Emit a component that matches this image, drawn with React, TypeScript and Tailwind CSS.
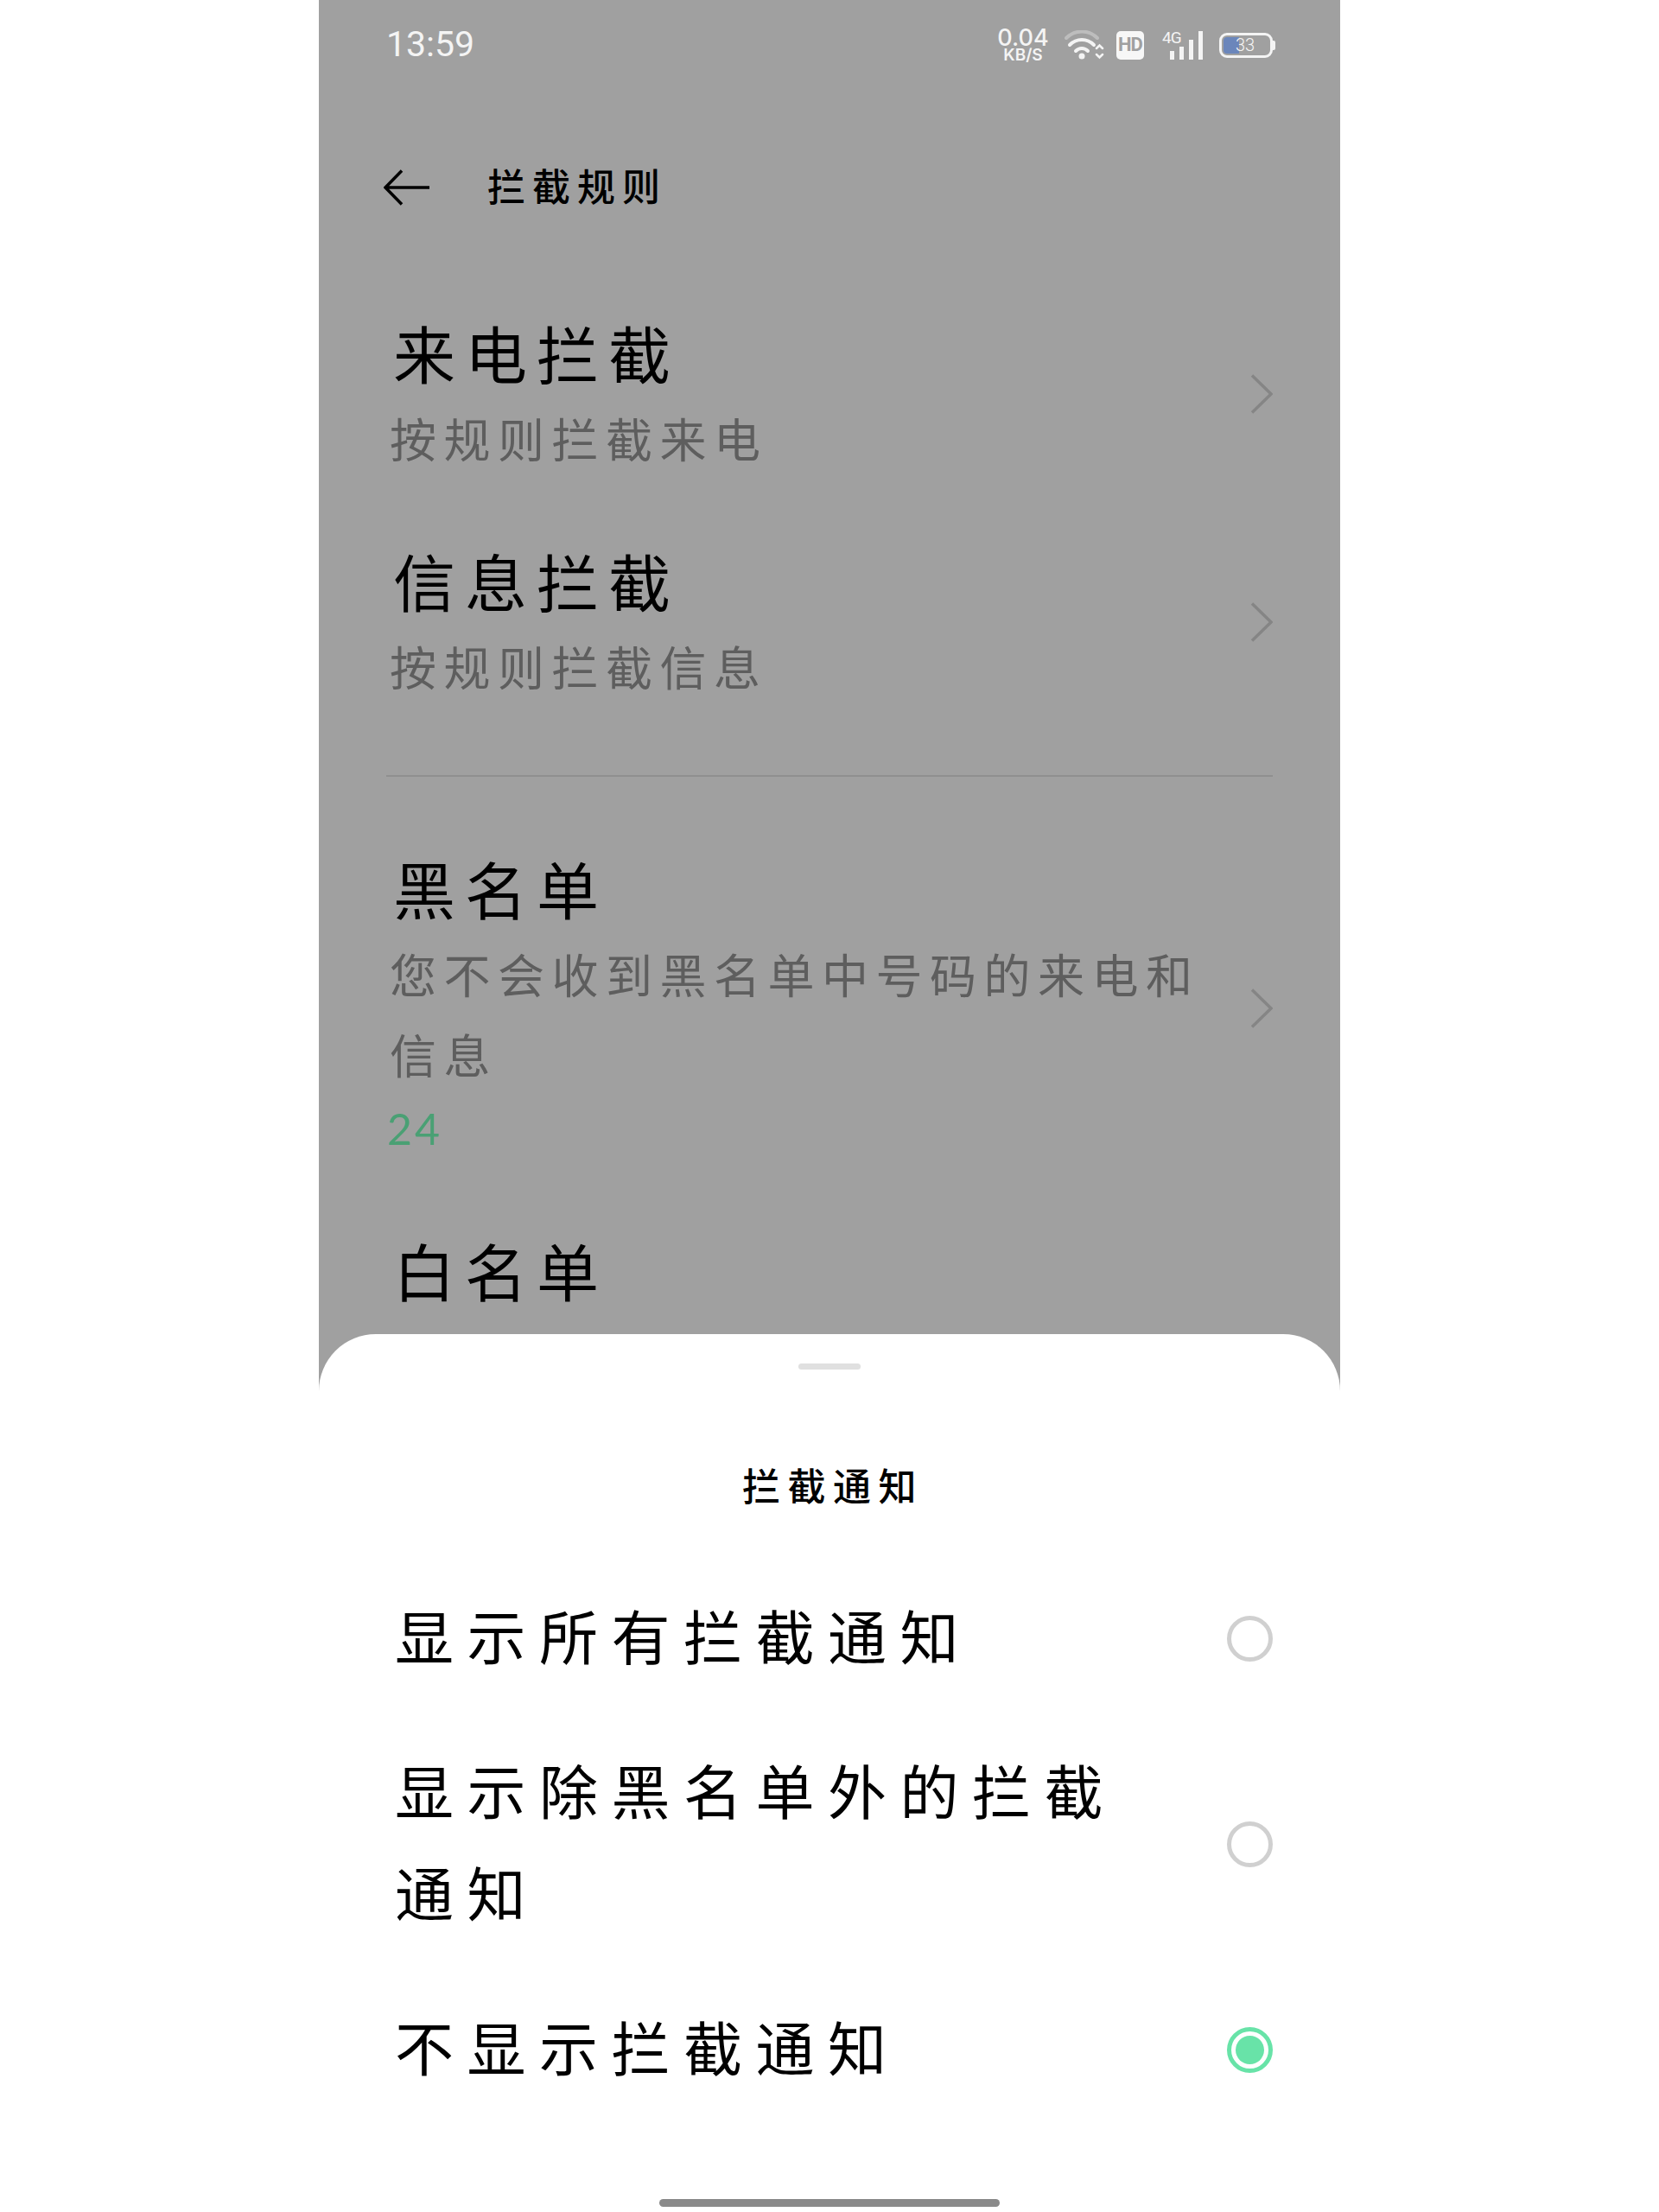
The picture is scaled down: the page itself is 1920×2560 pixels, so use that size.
const cjk = "font-['Noto_Sans_CJK_SC','Noto_Sans_CJK_JP',sans-serif]";

function Chevron({ raised }: { raised?: boolean }) {
  return (
    <svg
      viewBox="0 0 26 46"
      className={`h-[46px] w-[26px] shrink-0 ${raised ? "mb-[8px]" : "mt-[8px]"}`}
      fill="none"
      stroke="#858585"
      strokeWidth="3.5"
    >
      <path d="M2 1.5 L24 23 L2 44.5" />
    </svg>
  );
}

function RuleItem({ title, sub, count, raised }: { title: string; sub: string; count?: string; raised?: boolean }) {
  return (
    <div className="flex items-center justify-between">
      <div className="w-[950px]">
        <p className="pl-[8px] text-[72px] leading-[80px] tracking-[11px] text-black">{title}</p>
        <p className="mt-[13px] pl-[4px] text-[54px] leading-[93px] tracking-[8.5px] text-[#5e5e5e]">{sub}</p>
        {count && (
          <p className="mt-[8px] pl-[1px] font-['Lato',sans-serif] text-[50px] leading-[64px] tracking-[3px] text-[#4aa074]">
            {count}
          </p>
        )}
      </div>
      <Chevron raised={raised} />
    </div>
  );
}

function Radio({ checked }: { checked?: boolean }) {
  if (checked) {
    return (
      <div className="mt-[8px] flex h-[53px] w-[53px] shrink-0 items-center justify-center rounded-full border-[5px] border-[#68e3a8]">
        <div className="h-[33px] w-[33px] rounded-full bg-[#68e3a8]" />
      </div>
    );
  }
  return <div className="mt-[8px] h-[53px] w-[53px] shrink-0 rounded-full border-[5px] border-[#d0d0d0]" />;
}

function StatusIcons() {
  return (
    <div className="-mr-[3px] flex items-center">
      <div className="flex w-[60px] flex-col items-center font-['Inter',sans-serif] font-medium text-[#f4f4f4]">
        <span className="text-[27px] leading-[23px]">0.04</span>
        <span className="text-[19px] leading-[17px] font-semibold">KB/S</span>
      </div>
      <svg viewBox="0 0 46 34" className="ml-[18px] h-[34px] w-[46px]" fill="none" strokeLinecap="round">
        <path d="M2 9 C12 -1 28 -1 38 9" stroke="#bdbdbd" strokeWidth="4" />
        <path d="M6 17 C14 9 26 9 34 17" stroke="#f4f4f4" strokeWidth="4" />
        <path d="M13 24 C17 20 23 20 27 24" stroke="#f4f4f4" strokeWidth="4" />
        <circle cx="20" cy="30" r="3.5" fill="#f4f4f4" />
        <path d="M37 21 L40.5 17.5 L44 21 M37 28 L40.5 31.5 L44 28" stroke="#f4f4f4" strokeWidth="2.5" />
      </svg>
      <div className="ml-[14px] flex h-[33px] w-[32px] items-center justify-center rounded-[5px] bg-[#f7f7f7] font-['Roboto',sans-serif] text-[22px] leading-none font-bold tracking-[-1px] text-[#a0a0a0]">
        HD
      </div>
      <div className="relative ml-[21px] flex h-[33px] w-[47px] items-end justify-end gap-[6px]">
        <span className="absolute top-[-2px] left-0 font-['Roboto',sans-serif] text-[19px] leading-[20px] tracking-[-1px] text-[#f4f4f4]">
          4G
        </span>
        <div className="h-[10px] w-[5px] bg-[#f4f4f4]" />
        <div className="h-[15px] w-[5px] bg-[#f4f4f4]" />
        <div className="h-[23px] w-[5px] bg-[#f4f4f4]" />
        <div className="h-[33px] w-[5px] bg-[#f4f4f4]" />
      </div>
      <div className="ml-[19px] flex items-center">
        <div className="relative flex h-[29px] w-[62px] items-center rounded-[9px] border-[3px] border-[#f4f4f4] p-[2px]">
          <div className="h-full w-[18px] rounded-l-[4px] bg-[#6b86bb]" />
          <span className="absolute left-[16px] font-['Roboto',sans-serif] text-[20px] leading-none font-light text-[#f4f4f4]">
            33
          </span>
        </div>
        <div className="h-[11px] w-[3px] rounded-r-[2px] bg-[#f4f4f4]" />
      </div>
    </div>
  );
}

export default function App() {
  return (
    <div className={`flex h-[2560px] w-[1920px] justify-center overflow-hidden bg-white ${cjk}`}>
      <div className="relative h-[2560px] w-[1182px] overflow-hidden bg-[#a0a0a0] px-[78px]">
        <div className="flex h-[104px] items-center justify-between">
          <span className="font-['Roboto',sans-serif] text-[41px] font-normal text-[#f4f4f4]">13:59</span>
          <StatusIcons />
        </div>

        <div className="mt-[61px] flex h-[104px] items-center">
          <svg viewBox="0 0 54 42" className="-ml-[3px] h-[42px] w-[54px]" fill="none" stroke="#000" strokeWidth="3.5">
            <path d="M21 1.5 L2 21 L21 40.5 M2 21 H53" />
          </svg>
          <h1 className="mb-[6px] ml-[66px] text-[44px] leading-[60px] font-medium tracking-[8px] text-black">
            拦截规则
          </h1>
        </div>

        <div className="mt-[98px]">
          <RuleItem title="来电拦截" sub="按规则拦截来电" raised />
          <div className="mt-[78px]">
            <RuleItem title="信息拦截" sub="按规则拦截信息" raised />
          </div>
          <div className="mt-[80px] h-[2px] bg-[#8f8f8f]" />
          <div className="mt-[88px]">
            <RuleItem title="黑名单" sub="您不会收到黑名单中号码的来电和信息" count="24" />
          </div>
          <div className="mt-[91px]">
            <RuleItem title="白名单" sub="您不会拦截白名单中号码的来电和信息" />
          </div>
        </div>

        <div className="absolute inset-x-0 bottom-0 flex h-[1016px] flex-col rounded-t-[66px] bg-white px-[78px]">
          <div className="mx-auto mt-[34px] h-[7px] w-[72px] rounded-full bg-[#e0e0e0]" />
          <h2 className="mt-[103px] pl-[8px] text-center text-[44px] leading-[60px] font-medium tracking-[8.5px] text-black">
            拦截通知
          </h2>
          <div className="mt-[85px] flex flex-col gap-[61px]">
            <div className="flex items-center justify-between">
              <p className="w-[860px] pl-[10px] text-[68px] leading-[118px] tracking-[15.5px] text-black">
                显示所有拦截通知
              </p>
              <Radio />
            </div>
            <div className="flex items-center justify-between">
              <p className="w-[860px] pl-[10px] text-[68px] leading-[118px] tracking-[15.5px] text-black">
                显示除黑名单外的拦截通知
              </p>
              <Radio />
            </div>
            <div className="flex items-center justify-between">
              <p className="w-[860px] pl-[10px] text-[68px] leading-[118px] tracking-[15.5px] text-black">
                不显示拦截通知
              </p>
              <Radio checked />
            </div>
          </div>
          <div className="mx-auto mt-[118px] h-[9px] w-[394px] rounded-full bg-[#8a8a8a]" />
        </div>
      </div>
    </div>
  );
}
